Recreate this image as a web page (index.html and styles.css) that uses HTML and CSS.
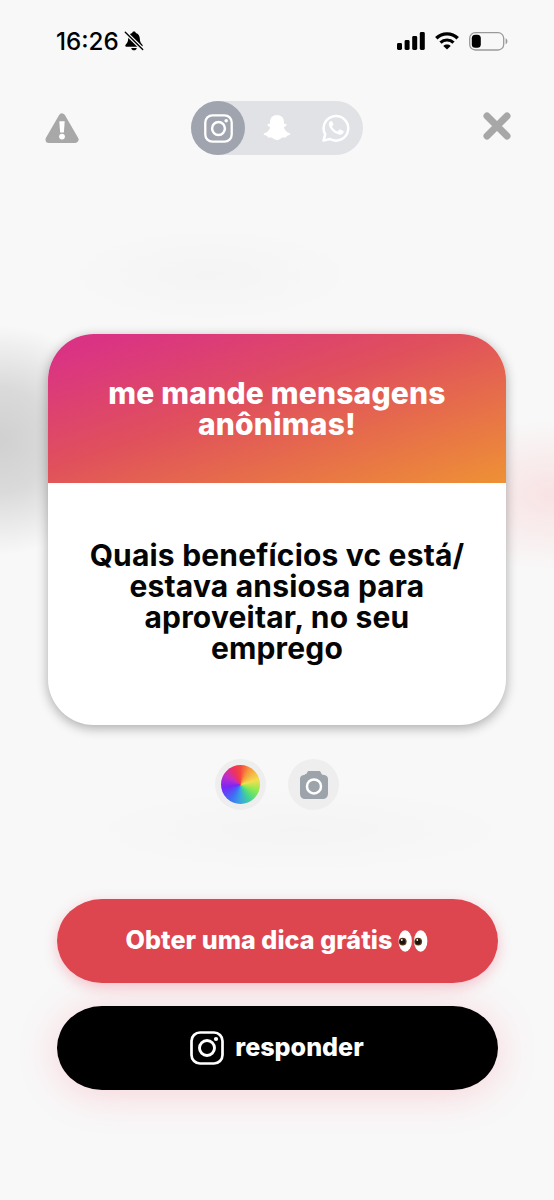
FILE: index.html
```html
<!DOCTYPE html>
<html lang="pt-BR">
<head>
  <meta charset="UTF-8">
  <title>Mensagens anônimas</title>
  <link rel="stylesheet" href="styles.css">
</head>
<body>

  <!-- Shared icons -->
  <svg class="sprite" width="0" height="0">
    <symbol id="instagram" viewBox="0 0 34 34">
      <rect x="1.5" y="1.5" width="31" height="31" rx="8.5" fill="none" stroke="currentColor" stroke-width="2.7"/>
      <circle cx="17" cy="17" r="7.5" fill="none" stroke="currentColor" stroke-width="2.9"/>
      <circle cx="26" cy="8" r="2.1" fill="currentColor"/>
    </symbol>
  </svg>

  <!-- Status bar -->
  <div class="status-bar">
    <div class="status-left">
      <span class="time">16:26</span>
      <svg class="bell" width="20" height="20" viewBox="0 0 20 20">
        <path d="M10 .6c-.9 0-1.6.5-1.8 1.3C5.600 2.700 4.300 4.800 4.200 7.500c-.1 3-.8 4.200-2.400 5.900-.8.900-.7 2.300.7 2.300h15c1.400 0 1.500-1.400.7-2.300-1.600-1.700-2.300-2.900-2.400-5.900-.1-2.700-1.400-4.800-4-5.600C11.600 1.100 10.900.6 10 .6zM7.200 16.900c.3 1.400 1.400 2.300 2.800 2.300s2.500-.9 2.800-2.300z"/>
        <path d="M1.300 1.300L18.700 18.500" stroke="#f9f9f9" stroke-width="3.800"/>
        <path d="M1.300 1.300L18.700 18.500" stroke="#000" stroke-width="1.400" stroke-linecap="round"/>
      </svg>
    </div>
    <div class="status-right">
      <svg width="28" height="18" viewBox="0 0 28 18">
        <rect x="0" y="11" width="5" height="7" rx="1.400"/>
        <rect x="7.600" y="8" width="5" height="10" rx="1.400"/>
        <rect x="15.200" y="4" width="5" height="14" rx="1.400"/>
        <rect x="22.800" y="0" width="5" height="18" rx="1.400"/>
      </svg>
      <svg width="24" height="18" viewBox="0 0 24 18">
        <path d="M1.300 6.300C7.200 .4 16.800 .4 22.700 6.300" fill="none" stroke="#000" stroke-width="3.400"/>
        <path d="M5.500 10.600c3.600-3.500 9.400-3.500 13 0" fill="none" stroke="#000" stroke-width="3.200"/>
        <path d="M8.300 13.900c2-1.900 5.400-1.900 7.400 0L12 17.600z"/>
      </svg>
      <svg width="39" height="19" viewBox="0 0 39 19">
        <rect x=".7" y=".7" width="34" height="17.300" rx="5.600" fill="none" stroke="#9a9a9a" stroke-width="1.300"/>
        <rect x="2.800" y="2.800" width="9" height="13" rx="3.500"/>
        <path d="M36.600 6.300c2.400.8 2.400 5.200 0 6z" fill="#9a9a9a"/>
      </svg>
    </div>
  </div>

  <!-- Top bar: report, network switch, close -->
  <div class="top-bar">
    <svg class="report" width="34" height="31" viewBox="0 0 34 31">
      <path d="M17 4L30 26.500H4z" fill="#a8a8a8" stroke="#a8a8a8" stroke-width="7" stroke-linejoin="round"/>
      <path d="M14.300 8.200h5.400l-.8 11.300h-3.800z" fill="#fff"/>
      <circle cx="17" cy="23.600" r="2.900" fill="#fff"/>
    </svg>
    <div class="networks">
      <div class="network active">
        <svg width="29" height="29"><use href="#instagram"/></svg>
      </div>
      <div class="network">
        <svg width="28" height="28" viewBox="0 0 28 28">
          <path fill="#fff" d="M14 1c4.400 0 7 3 7 7.300v1.800c.9-.5 2.600-.3 2.500.9-.1 1-1.300 1.500-2.200 1.900-.5.200-.5.700-.2 1.400 1.100 2.500 3 4.200 5.600 4.900.9.300.8 1.200-.1 1.700-1 .5-2.300.7-2.900 1-.4.300-.2 1.300-.8 1.600-.9.300-2.300-.4-3.900.2-1.700.700-2.700 2.300-5 2.300s-3.300-1.600-5-2.300c-1.600-.6-3 .1-3.900-.2-.6-.3-.4-1.300-.8-1.600-.6-.3-1.900-.5-2.900-1-.9-.5-1-1.400-.1-1.700 2.600-.7 4.500-2.400 5.600-4.900.3-.7.300-1.200-.2-1.400-.9-.4-2.100-.9-2.200-1.900-.1-1.200 1.600-1.400 2.500-.9V8.300C7 4 9.600 1 14 1z"/>
        </svg>
      </div>
      <div class="network">
        <svg width="28" height="28" viewBox="0 0 28 28">
          <path d="M1.500 26.600l1.700-6.300A12.300 12.300 0 1 1 7.900 25z" fill="none" stroke="#fff" stroke-width="2.500" stroke-linejoin="round"/>
          <path fill="#fff" d="M10.300 7.700c-.3-.7-.6-.8-1-.8-.8 0-2.500.9-2.500 3.200 0 4.300 6.400 10.600 11.200 10.600 2.200 0 3.700-1.500 3.700-2.900 0-.6-.1-.8-.7-1.100l-2.700-1.300c-.5-.200-.8-.1-1.100.3l-1.200 1.400c-.3.300-.6.400-1.100.2-2.100-.9-3.700-2.400-4.700-4.200-.2-.4-.1-.7.200-1l.9-1.200c.2-.3.200-.6.100-.9z"/>
        </svg>
      </div>
    </div>
    <svg class="close" width="28" height="28" viewBox="0 0 28 28">
      <path d="M4 4l20 20M24 4L4 24" stroke="#a7a7a7" stroke-width="7" stroke-linecap="round"/>
    </svg>
  </div>

  <!-- Question card -->
  <div class="card">
    <div class="card-header">me mande mensagens<br>anônimas!</div>
    <div class="card-body">Quais benefícios vc está/<br>estava ansiosa para<br>aproveitar, no seu<br>emprego</div>
  </div>

  <div class="tools">
    <div class="tool"><div class="color-wheel"></div></div>
    <div class="tool">
      <svg width="28" height="28" viewBox="0 0 28 28">
        <path fill="#9da3aa" d="M8.500 0h11c1.300 0 1.500 2.500 2.500 3.500C22.700 4.200 28 3.400 28 8v14c0 4.200-1.800 6-6 6H6c-4.200 0-6-1.800-6-6V8c0-4.600 5.300-3.800 6-4.500C7 2.500 7.200 0 8.500 0z"/>
        <circle cx="14" cy="15.400" r="7" fill="none" stroke="#fff" stroke-width="2.500"/>
      </svg>
    </div>
  </div>

  <div class="actions">
    <div class="button hint">
      <span class="label">Obter uma dica grátis</span>
      <svg width="30" height="22" viewBox="0 0 30 22">
        <ellipse cx="7.200" cy="11" rx="6.700" ry="10.700" fill="#fff"/>
        <ellipse cx="22.700" cy="11" rx="6.700" ry="10.700" fill="#fff"/>
        <circle cx="4.700" cy="11.600" r="3.900" fill="#5b3a1c"/>
        <circle cx="20.200" cy="11.600" r="3.900" fill="#5b3a1c"/>
        <circle cx="4.500" cy="11.700" r="2.700" fill="#1c130d"/>
        <circle cx="20" cy="11.700" r="2.700" fill="#1c130d"/>
        <circle cx="3.800" cy="10" r=".9" fill="#fff"/>
        <circle cx="19.300" cy="10" r=".9" fill="#fff"/>
      </svg>
    </div>
    <div class="button reply">
      <svg width="34" height="34"><use href="#instagram"/></svg>
      <span class="label">responder</span>
    </div>
  </div>

</body>
</html>
```

FILE: styles.css
```css
* {
  box-sizing: border-box;
}

body {
  margin: 0;
  height: 1200px;
  display: flex;
  flex-direction: column;
  align-items: center;
  overflow: hidden;
  font-family: Inter, "Liberation Sans", sans-serif;
  background:
    radial-gradient(ellipse 120px 115px at 0 440px, rgba(0,0,0,0.16), rgba(0,0,0,0.12) 45%, transparent),
    radial-gradient(ellipse 130px 75px at 554px 495px, rgba(255,80,90,0.13), transparent),
    radial-gradient(ellipse 150px 50px at 210px 275px, rgba(0,0,0,0.015), transparent),
    radial-gradient(ellipse 220px 45px at 300px 830px, rgba(0,0,0,0.015), transparent),
    #f8f8f8;
}

svg {
  display: block;
  flex-shrink: 0;
}

.sprite {
  position: absolute;
}

.status-bar {
  width: 100%;
  height: 82px;
  padding: 0 46px 0 56px;
  display: flex;
  align-items: center;
  justify-content: space-between;
}

.status-left {
  display: flex;
  align-items: center;
  gap: 5px;
}

.time {
  font-size: 24.2px;
  font-weight: 500;
}

.status-right {
  display: flex;
  align-items: center;
  gap: 10px;
}

.top-bar {
  width: 100%;
  height: 54px;
  margin-top: 19px;
  padding: 0 43px;
  display: grid;
  grid-template-columns: 1fr auto 1fr;
  align-items: center;
}

.report {
  margin-left: 2px;
}

.networks {
  display: flex;
  align-items: center;
  justify-content: space-between;
  width: 172px;
  height: 54px;
  border-radius: 27px;
  background: #e1e2e6;
}

.network {
  width: 54px;
  height: 54px;
  display: flex;
  align-items: center;
  justify-content: center;
}

.network.active {
  border-radius: 50%;
  background: #a0a4ae;
  color: white;
}

.close {
  justify-self: end;
  margin-bottom: 4px;
}

.card {
  width: 458px;
  height: 391px;
  margin-top: 179px;
  border-radius: 46px;
  overflow: hidden;
  background: white;
  box-shadow: 0 3px 12px rgba(0,0,0,0.32);
  text-align: center;
  line-height: 31px;
}

.card-header {
  height: 149px;
  padding-top: 44px;
  color: white;
  font-size: 30px;
  font-weight: 800;
  letter-spacing: 0.2px;
  background: linear-gradient(162deg, #da3384 8%, #e0505c 45%, #ee9135 100%);
}

.card-body {
  padding-top: 57px;
  color: #050505;
  font-size: 30px;
  font-weight: 700;
  letter-spacing: 0.18px;
}

.tools {
  display: flex;
  gap: 22px;
  margin-top: 34px;
}

.tool {
  width: 51px;
  height: 51px;
  border-radius: 50%;
  background: #eeeeef;
  display: flex;
  align-items: center;
  justify-content: center;
}

.color-wheel {
  width: 39px;
  height: 39px;
  border-radius: 50%;
  background: conic-gradient(#f4473d, #f59a3d 30deg, #f2df50 75deg, #90ea50 110deg, #47d78c 145deg, #3aa5e0 180deg, #3f6cf5 215deg, #7a26f5 260deg, #c22dc8 300deg, #ee3260 335deg, #f4473d);
}

.actions {
  display: flex;
  flex-direction: column;
  gap: 23px;
  margin-top: 89px;
}

.button {
  width: 441px;
  height: 84px;
  border-radius: 45px / 42px;
  display: flex;
  align-items: center;
  justify-content: center;
  color: white;
  font-size: 25.1px;
  font-weight: 800;
}

.label {
  margin-bottom: 2px;
}

/* sits above the glow of the reply button */
.hint {
  position: relative;
  z-index: 1;
  gap: 6px;
  background: #dd454f;
  box-shadow: 0 4px 14px rgba(240,70,100,0.3);
}

.hint .label {
  letter-spacing: 0.05px;
}

.reply {
  gap: 11px;
  background: black;
  box-shadow: 0 4px 40px rgba(255,80,110,0.22);
}
```
